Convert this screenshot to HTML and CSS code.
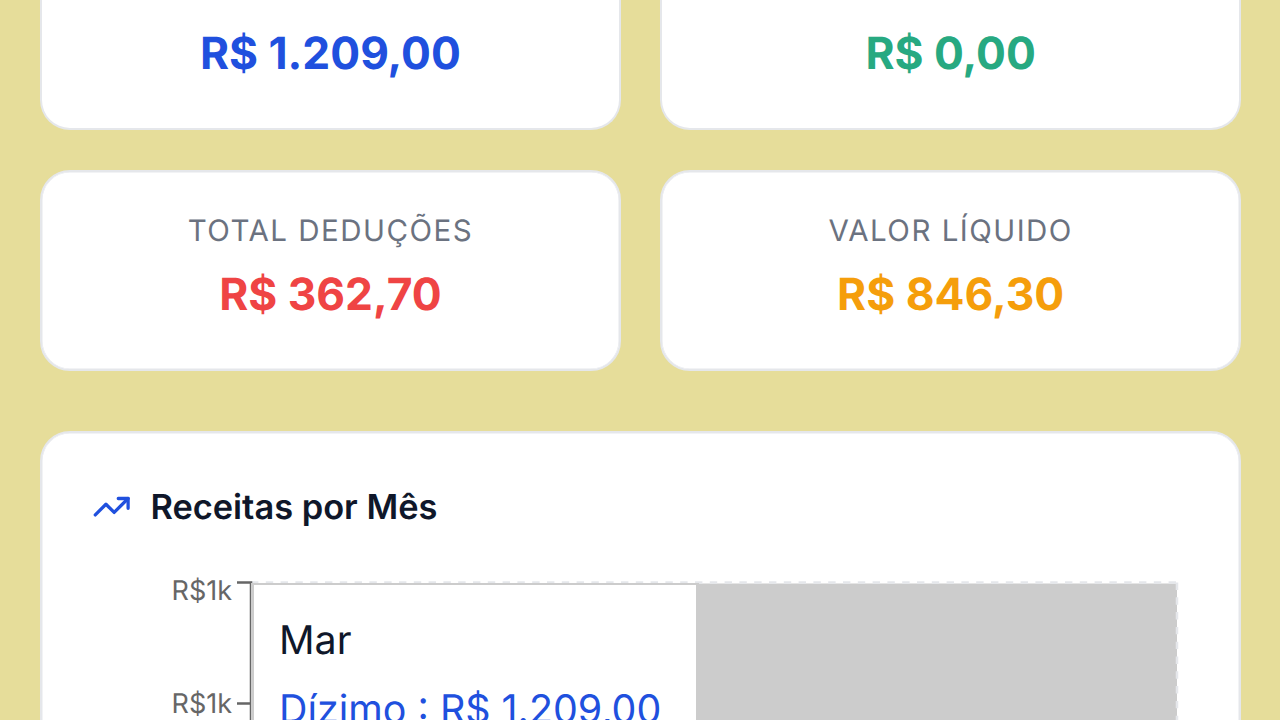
FILE: index.html
```
<!doctype html>
<html lang="pt-BR">

<head>
    <meta charset="utf-8">
    <title>Receitas</title>
    <meta name="viewport" content="width=device-width, initial-scale=1">
    <link rel="stylesheet" href="styles.css">
</head>

<body>
    <main class="dashboard">
        <section class="stats">
            <div class="stat-card stat-card--top">
                <div class="stat-card__value stat-card__value--blue">R$ 1.209,00</div>
            </div>
            <div class="stat-card stat-card--top">
                <div class="stat-card__value stat-card__value--green">R$ 0,00</div>
            </div>
            <div class="stat-card">
                <div class="stat-card__label">Total Deduções</div>
                <div class="stat-card__value stat-card__value--red">R$ 362,70</div>
            </div>
            <div class="stat-card">
                <div class="stat-card__label">Valor Líquido</div>
                <div class="stat-card__value stat-card__value--orange">R$ 846,30</div>
            </div>
        </section>
        <section class="chart-card">
            <h2 class="chart-card__title">
                <svg class="chart-card__icon" viewBox="0 0 24 24">
                    <polyline points="22 7 13.5 15.5 8.5 10.5 2 17" />
                    <polyline points="16 7 22 7 22 13" />
                </svg>
                <span>Receitas por Mês</span>
            </h2>
            <div class="chart">
                <svg class="chart__svg" width="1096" height="320" viewBox="0 0 1096 320">
                    <rect class="chart__cursor" x="159" y="12.5" width="926" height="307" />
                    <path class="chart__grid" d="M159 11.5H1085" />
                    <path class="chart__grid" d="M1085 11.5V320" />
                    <path class="chart__axis" d="M145 11.5H159V320M145 132.5H159" />
                    <text class="chart__tick" x="140" y="29">R$1k</text>
                    <text class="chart__tick" x="140" y="142">R$1k</text>
                </svg>
                <div class="tooltip">
                    <p class="tooltip__label">Mar</p>
                    <p class="tooltip__item">Dízimo : R$ 1.209,00</p>
                </div>
            </div>
        </section>
    </main>
</body>

</html>
```

FILE: styles.css
```
* {
    box-sizing: border-box;
    padding: 0;
    margin: 0;
}

body {
    height: 720px;
    overflow: hidden;
    background-color: #e6dd9a;
    font-family: Inter, "Liberation Sans", sans-serif;
    color: #0f172a;
    text-rendering: geometricPrecision;
}

.dashboard {
    width: 1281px;
    padding: 0 40px;
}

.stats {
    display: grid;
    grid-template-columns: 1fr 1fr;
    grid-template-rows: 130px 201px;
    gap: 40px 39.5px;
}

.stat-card {
    padding-top: 38px;
    border: 2px solid #e5e7eb;
    border-radius: 30px;
    background-color: #fff;
    box-shadow: inset 0 0 0 0.5px #e5e7eb;
    text-align: center;
}

.stat-card--top {
    padding-top: 24px;
    border-top: 0;
    border-radius: 0 0 30px 30px;
    box-shadow: none;
}

.stat-card__label {
    height: 42px;
    margin-bottom: 13px;
    font-size: 29.5px;
    line-height: 42px;
    letter-spacing: 1.48px;
    text-transform: uppercase;
    color: #6b7280;
}

.stat-card__value {
    font-size: 44.3px;
    font-weight: 700;
    line-height: 58px;
}

.stat-card__value--blue {
    color: #2050de;
}

.stat-card__value--green {
    color: #27a981;
}

.stat-card__value--red {
    color: #ef4444;
}

.stat-card__value--orange {
    color: #f59e0b;
}

.chart-card {
    height: 500px;
    margin-top: 60px;
    padding: 49px 50px;
    border: 2px solid #e5e7eb;
    border-radius: 30px;
    background-color: #fff;
    box-shadow: inset 0 0 0 0.5px #e5e7eb;
}

.chart-card__title {
    display: flex;
    align-items: center;
    gap: 19px;
    height: 50px;
    margin-bottom: 39px;
    font-size: 34.4px;
    font-weight: 600;
}

.chart-card__icon {
    width: 39.4px;
    height: 39.4px;
    fill: none;
    stroke: #2050de;
    stroke-width: 2;
    stroke-linecap: round;
    stroke-linejoin: round;
}

.chart {
    position: relative;
}

.chart__svg {
    display: block;
}

.chart__cursor {
    fill: #ccc;
}

.chart__grid {
    fill: none;
    stroke: #e5e7eb;
    stroke-width: 2.5;
    stroke-dasharray: 7.4 7.4;
}

.chart__axis {
    fill: none;
    stroke: #666;
    stroke-width: 2.5;
}

.chart__tick {
    font-size: 27px;
    fill: #666;
    text-anchor: end;
}

/* hovered month */
.tooltip {
    position: absolute;
    top: 12px;
    left: 159px;
    width: 448px;
    height: 200px;
    padding: 25px;
    border: 3px solid #ccc;
    border-top-width: 2px;
    background-color: #fff;
    font-size: 39.4px;
    line-height: 60px;
    white-space: nowrap;
}

.tooltip__item {
    padding-top: 9px;
    color: #2050de;
}
```
